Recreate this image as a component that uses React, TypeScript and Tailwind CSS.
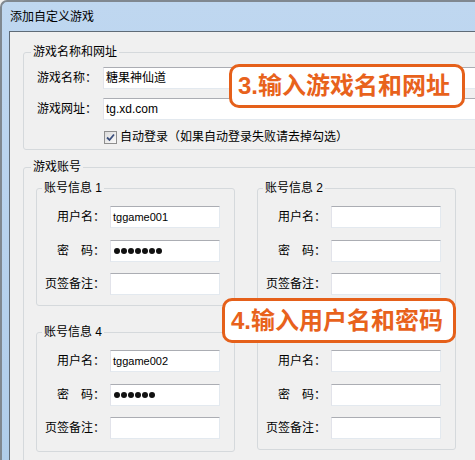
import React from "react";

const Field = ({ children, className = "" }: { children?: React.ReactNode; className?: string }) => (
  <div
    className={`h-[22px] bg-white border border-[#e3e9ef] border-t-[#abadb3] border-l-[#e2e3ea] flex items-center ${className}`}
  >
    {children}
  </div>
);

const Dots = ({ n }: { n: number }) => (
  <div className="flex gap-[1px] pl-[3px]" aria-label="password">
    {Array.from({ length: n }).map((_, i) => (
      <span key={i} className="w-[6px] h-[6px] rounded-full bg-[#111]" />
    ))}
  </div>
);

type Account = { title?: string; user?: string; pass?: number; tall?: boolean };

// legend of the 3rd box is hidden behind the callout in the shot
const AccountBox = ({ title, user, pass, tall }: Account) => (
  <fieldset className="border border-[#d5d9dc] rounded-[3px]">
    {title ? (
      <legend className="ml-[5px] px-[2px] leading-[16px]">{title}</legend>
    ) : (
      <legend className="ml-[5px] w-0 h-[16px]" />
    )}
    <div className={`pl-[8px] pt-[10px] flex flex-col ${tall ? "pb-[12px]" : "pb-[10px]"}`}>
      <div className="flex items-center">
        <span className="w-[60px] text-right">用户名：</span>
        <Field className="ml-[5px] w-[110px]">
          {user && <span className="pl-[2px] text-[11px]">{user}</span>}
        </Field>
      </div>
      <div className="flex items-center mt-[12px]">
        <span className="w-[60px] text-right">密　码：</span>
        <Field className="ml-[5px] w-[110px]">{pass ? <Dots n={pass} /> : null}</Field>
      </div>
      <div className="flex items-center mt-[11px]">
        <span className="w-[60px] text-right">页签备注：</span>
        <Field className="ml-[5px] w-[110px]" />
      </div>
    </div>
  </fieldset>
);

const Callout = ({ text, className }: { text: string; className: string }) => (
  <div
    className={`absolute bg-white border-[3px] border-[#e5601a] rounded-[10px] flex items-center pl-[6px] text-[24px] font-bold text-[#e8621c] leading-none ${className}`}
  >
    {text}
  </div>
);

export default function App() {
  return (
    <div className="relative w-[475px] h-[460px] overflow-hidden bg-[#f0f0f0] text-[12px] leading-[16px] text-black font-['Liberation_Sans','Noto_Sans_CJK_SC',sans-serif]">
      <div className="min-h-full flex flex-col bg-gradient-to-b from-[#bfd7f0] to-[#b0cdea] border-t-2 border-l-2 border-[#808890] rounded-tl-[7px] pl-[7px]">
        <div className="h-[29px] shrink-0 flex items-center pl-[1px]">添加自定义游戏</div>
        <div className="flex-1 bg-[#f0f0f0] border-t border-l border-[#5f6b77] pl-[13px] pt-[12px]">
          <fieldset className="w-[500px] border border-[#d5d9dc] rounded-[3px]">
            <legend className="ml-[7px] px-[2px] leading-[16px]">游戏名称和网址</legend>
            <div className="pl-[13px] pt-[7px] pb-[4px] flex flex-col">
              <div className="flex items-center">
                <span className="w-[66px]">游戏名称：</span>
                <Field className="flex-1">
                  <span className="pl-[2px]">糖果神仙道</span>
                </Field>
              </div>
              <div className="flex items-center mt-[9px]">
                <span className="w-[66px]">游戏网址：</span>
                <Field className="flex-1">
                  <span className="pl-[2px]">tg.xd.com</span>
                </Field>
              </div>
              <div className="flex items-center mt-[9px] h-[16px] pl-[67px]">
                <span className="w-[13px] h-[13px] border border-[#8f8f8f] bg-gradient-to-br from-[#dcdcdc] to-[#fafafa] flex items-center justify-center">
                  <svg width="9" height="9" viewBox="0 0 9 9">
                    <path d="M1 4.5 L3.5 7 L8 1.5" fill="none" stroke="#3b4f7d" strokeWidth="1.8" />
                  </svg>
                </span>
                <span className="ml-[3px]">自动登录（如果自动登录失败请去掉勾选）</span>
              </div>
            </div>
          </fieldset>

          <fieldset className="w-[500px] mt-[9px] border border-[#d5d9dc] rounded-[3px]">
            <legend className="ml-[7px] px-[2px] leading-[16px]">游戏账号</legend>
            <div className="pl-[12px] pt-[5px] pb-[10px] grid grid-cols-[199px_199px] items-start gap-x-[22px] gap-y-[18px]">
              <AccountBox title="账号信息 1" user="tggame001" pass={7} />
              <AccountBox title="账号信息 2" />
              <AccountBox title="账号信息 4" user="tggame002" pass={6} tall />
              <AccountBox />
            </div>
          </fieldset>
        </div>
      </div>

      <Callout text="3.输入游戏名和网址" className="left-[229px] top-[64px] w-[236px] h-[44px]" />
      <Callout text="4.输入用户名和密码" className="left-[222px] top-[298px] w-[234px] h-[45px]" />
    </div>
  );
}
